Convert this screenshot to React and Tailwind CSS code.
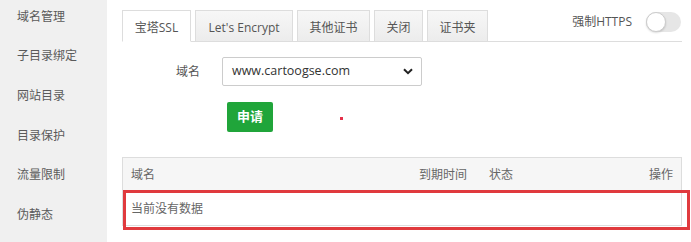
import React from "react";

const font = { fontFamily: '"Open Sans", "Noto Sans CJK SC", sans-serif' };

export default function App() {
  const side = ["域名管理", "子目录绑定", "网站目录", "目录保护", "流量限制", "伪静态"];
  const tabs = ["宝塔SSL", "Let's Encrypt", "其他证书", "关闭", "证书夹"];
  return (
    <div
      className="flex h-[242px] w-[691px] overflow-hidden bg-white text-[12px] text-[#555]"
      style={font}
    >
      <div className="w-[107px] shrink-0 bg-[#f0f0f0]">
        <div className="mt-[-3px]">
          {side.map((s) => (
            <div key={s} className="flex h-[39.6px] items-center pl-[17px] text-[#5a5a5a]">
              {s}
            </div>
          ))}
        </div>
      </div>
      <div className="relative flex-1 pl-[15px] pr-[9px] pt-[10px]">
        <div className="flex h-[32px] items-end border-b border-[#ddd]">
          {tabs.map((t, i) =>
            i === 0 ? (
              <div
                key={t}
                className="mb-[-1px] mr-[4px] flex h-[32px] w-[69px] items-center justify-center border border-b-white border-[#ddd] bg-white pt-[4px] text-[#555]"
              >
                {t}
              </div>
            ) : (
              <div
                key={t}
                className={
                  "mr-[4px] flex h-[31px] items-center justify-center border border-b-0 border-[#ddd] bg-gradient-to-b from-[#f7f7f7] to-[#ececec] pt-[4px] text-[#555] " +
                  (i === 1 ? "w-[98px]" : i === 2 ? "w-[73px]" : i === 3 ? "w-[49px]" : "w-[61px]")
                }
              >
                {t}
              </div>
            )
          )}
          <div className="ml-auto mr-[1px] mt-[2px] flex h-[20px] items-center self-start">
            <span className="text-[#555]">强制HTTPS</span>
            <div className="ml-[14px] flex h-[20px] w-[35px] items-center rounded-full bg-[#e6e6e6]">
              <div className="h-[20px] w-[20px] rounded-full border border-[#ccc] bg-white shadow-[0_1px_2px_rgba(0,0,0,0.15)]" />
            </div>
          </div>
        </div>

        <div className="mt-[15px] flex h-[29px] items-center">
          <div className="w-[78px] text-right text-[#555]">域名</div>
          <div className="ml-[22px] flex h-[29px] w-[200px] items-center justify-between rounded-[2px] border border-[#ccc] bg-white pl-[9px] pr-[8px] text-[12.5px] text-[#333]">
            <span>www.cartoogse.com</span>
            <svg width="10" height="7" viewBox="0 0 10 7">
              <path d="M1 1.2 L5 5.2 L9 1.2" fill="none" stroke="#222" strokeWidth="2" />
            </svg>
          </div>
        </div>

        <div className="relative mt-[16px] h-[30px]">
          <div className="ml-[105px] flex h-[30px] w-[46px] items-center justify-center rounded-[2px] bg-[#20a53a] text-[13px] font-bold text-white">
            申请
          </div>
          <div className="absolute left-[218px] top-[15px] h-[3px] w-[3px] bg-[#e5304a]" />
        </div>

        <div className="mt-[25px]">
          <div className="flex h-[33px] items-center border border-b-0 border-[#ddd] bg-[#f6f6f6] pl-[8px] pr-[8px] pt-[1px] text-[#666]">
            <span className="w-[288px]">域名</span>
            <span className="w-[70px]">到期时间</span>
            <span>状态</span>
            <span className="ml-auto">操作</span>
          </div>
          <div className="flex h-[36px] items-center border border-t-0 border-[#ddd] pl-[8px] pt-[3px] text-[#666]">
            当前没有数据
          </div>
        </div>

        <div className="pointer-events-none absolute left-[16px] top-[190px] h-[40px] w-[567px] border-[3px] border-[#e03a3e]" />
      </div>
    </div>
  );
}
